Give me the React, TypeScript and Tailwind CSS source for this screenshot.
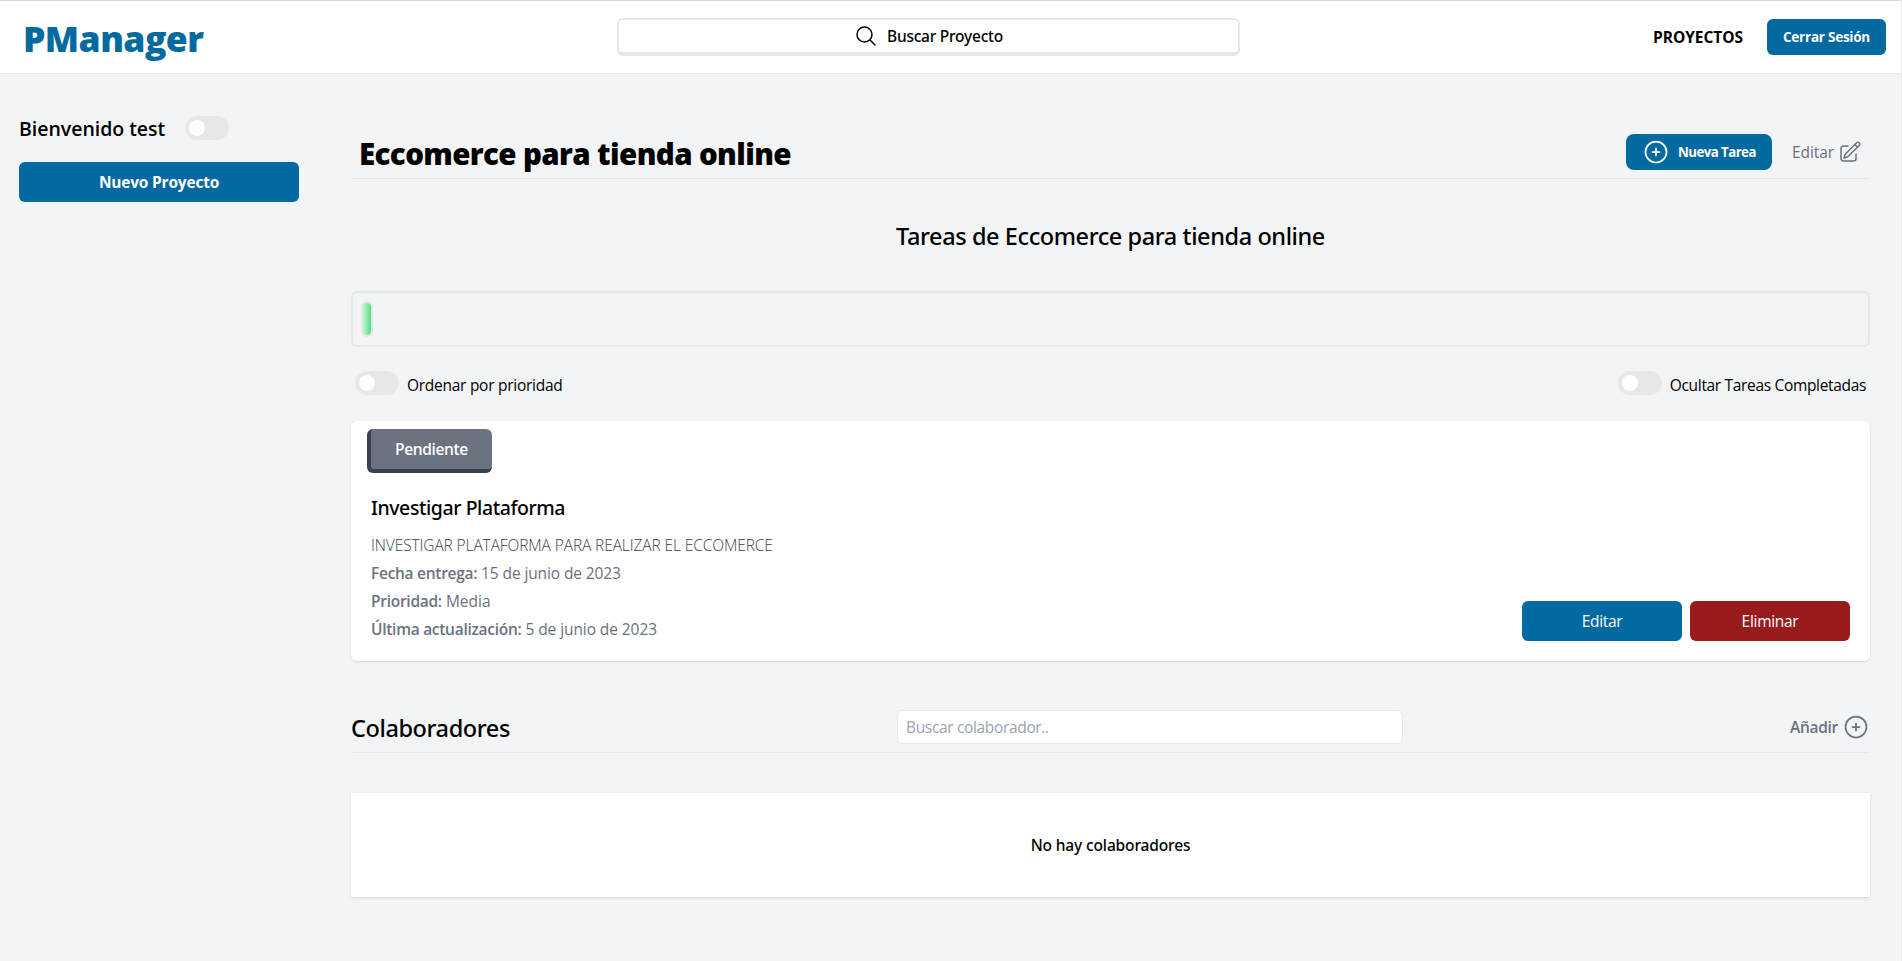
import type { ReactNode } from "react";

function Toggle() {
  return (
    <span className="flex h-6 w-11 shrink-0 items-center rounded-full bg-gray-200 px-1">
      <span className="size-4 rounded-full bg-white" />
    </span>
  );
}

function Icon({ className, children }: { className: string; children: ReactNode }) {
  return (
    <svg
      className={className}
      viewBox="0 0 24 24"
      fill="none"
      stroke="currentColor"
      strokeWidth={1.5}
      strokeLinecap="round"
      strokeLinejoin="round"
    >
      {children}
    </svg>
  );
}

function PlusCircle() {
  return (
    <Icon className="size-7 shrink-0">
      <path d="M12 9v6m3-3H9m12 0a9 9 0 11-18 0 9 9 0 0118 0z" />
    </Icon>
  );
}

function Header() {
  return (
    <header className="flex h-[74px] items-center border-t border-b border-t-[#d9d9d9] border-b-gray-200 bg-white pr-[15px] pl-[23px]">
      <h1 className="w-[594px] pt-px text-[35.5px] leading-10 font-extrabold tracking-[-0.57px] text-[#0369a1]">
        PManager
      </h1>
      <button className="flex h-[38px] w-[623px] items-center justify-center gap-[9px] rounded-md border-2 border-b-4 border-gray-200">
        <Icon className="size-6">
          <path d="M21 21l-5.197-5.197m0 0A7.5 7.5 0 105.196 5.196a7.5 7.5 0 0010.607 10.607z" />
        </Icon>
        <span className="font-['Noto_Sans',sans-serif] text-[15.5px] leading-6 font-medium tracking-[-0.23px]">
          Buscar Proyecto
        </span>
      </button>
      <nav className="ml-auto flex items-center gap-6">
        <a className="text-[15.5px] leading-6 font-bold tracking-[-0.05px]">PROYECTOS</a>
        <button className="h-9 w-[119px] rounded-md bg-[#0369a1] text-[13.5px] leading-5 font-bold tracking-[-0.24px] text-white">
          Cerrar Sesión
        </button>
      </nav>
    </header>
  );
}

function Sidebar() {
  return (
    <aside className="w-[280px] shrink-0 pt-10">
      <div className="flex h-7 items-center gap-5">
        <p className="pt-0.5 text-[19.5px] leading-7 font-semibold tracking-[-0.03px]">Bienvenido test</p>
        <Toggle />
      </div>
      <button className="mt-5 h-10 w-full rounded-md bg-[#0369a1] text-[15.5px] leading-6 font-bold tracking-[-0.2px] text-white">
        Nuevo Proyecto
      </button>
    </aside>
  );
}

function TaskCard() {
  return (
    <article className="mt-[26px] h-60 rounded-md bg-white px-4 pt-2 shadow">
      <div className="flex h-11 w-[125px] items-center justify-center rounded-md border-b-4 border-l-4 border-[#374151] bg-[#6b7280] text-[15.5px] leading-6 font-semibold tracking-[-0.37px] text-white">
        Pendiente
      </div>
      <div className="flex h-[168px] justify-between pr-1 pl-1">
        <div className="pt-[21px] text-[15.5px] leading-7 text-[#6b7280]">
          <h3 className="font-['Noto_Sans',sans-serif] text-[19.5px] leading-7 font-medium tracking-[-0.43px] text-black">
            Investigar Plataforma
          </h3>
          <p className="mt-[9px] font-light tracking-[-0.11px] text-[#374151] uppercase">
            Investigar plataforma para realizar el eccomerce
          </p>
          <p className="tracking-[-0.11px]">
            <b className="font-semibold tracking-[-0.28px]">Fecha entrega:</b> 15 de junio de 2023
          </p>
          <p>
            <b className="font-semibold tracking-[-0.27px]">Prioridad:</b> Media
          </p>
          <p className="tracking-[-0.08px]">
            <b className="font-semibold tracking-[-0.28px]">Última actualización:</b> 5 de junio de 2023
          </p>
        </div>
        <div className="flex items-end gap-2 text-[15.5px] leading-6 tracking-[-0.3px] text-white">
          <button className="h-10 w-40 rounded-md bg-[#0369a1]">Editar</button>
          <button className="h-10 w-40 rounded-md bg-[#991b1b]">Eliminar</button>
        </div>
      </div>
    </article>
  );
}

function Collaborators() {
  return (
    <section className="mt-[49px]">
      <div className="flex h-[43px] items-start border-b border-gray-200">
        <h2 className="w-[546px] pt-0.5 font-['Noto_Sans',sans-serif] text-[23.5px] leading-8 font-medium tracking-[-0.41px]">
          Colaboradores
        </h2>
        <input
          className="h-[34px] w-[506px] rounded-md border border-gray-200 bg-white px-2 text-[15.5px] tracking-[-0.34px] placeholder:text-[#9ca3af]"
          placeholder="Buscar colaborador.."
        />
        <button className="ml-auto flex h-[34px] items-center gap-1 text-[15.5px] leading-6 font-semibold tracking-[-0.3px] text-[#6b7280]">
          Añadir
          <PlusCircle />
        </button>
      </div>
      <div className="mt-10 flex h-[104px] items-center justify-center bg-white font-['Noto_Sans',sans-serif] text-[15.5px] leading-6 font-medium tracking-[-0.14px] shadow">
        No hay colaboradores
      </div>
    </section>
  );
}

export default function App() {
  return (
    <div className="h-[961px] overflow-hidden border-r border-[#e9eaec] bg-[#f3f4f6] font-['Open_Sans','Noto_Sans',sans-serif] text-black">
      <Header />
      <div className="flex gap-[52px] pr-[31px] pl-[19px]">
        <Sidebar />
        <main className="min-w-0 flex-1">
          <div className="flex h-[105px] items-end border-b border-gray-200 pb-2">
            <h2 className="-mb-0.5 pl-2 text-[29.5px] leading-9 font-extrabold tracking-[-0.62px]">
              Eccomerce para tienda online
            </h2>
            <button className="ml-auto flex h-9 w-[146px] items-center gap-2 rounded-lg bg-[#0369a1] pl-4 text-[13.25px] leading-5 font-bold tracking-[-0.54px] text-white">
              <PlusCircle />
              Nueva Tarea
            </button>
            <button className="mr-2 ml-5 flex h-9 items-center gap-1 text-[15.5px] leading-6 tracking-[-0.08px] text-[#6b7280]">
              Editar
              <Icon className="size-6">
                <path d="M16.862 4.487l1.687-1.688a1.875 1.875 0 112.652 2.652L10.582 16.07a4.5 4.5 0 01-1.897 1.13L6 18l.8-2.685a4.5 4.5 0 011.13-1.897l8.932-8.931zm0 0L19.5 7.125M18 14v4.75A2.25 2.25 0 0115.75 21H5.25A2.25 2.25 0 013 18.75V8.25A2.25 2.25 0 015.25 6H10" />
              </Icon>
            </button>
          </div>
          <h3 className="mt-[41px] text-center font-['Noto_Sans',sans-serif] text-[23.5px] leading-8 font-medium tracking-[-0.41px]">
            Tareas de Eccomerce para tienda online
          </h3>
          <div className="mt-[39px] h-14 rounded-md border-2 border-gray-200 p-2">
            <div className="h-9 w-3 rounded-md border-2 border-gray-200 bg-linear-to-r from-[#bbf7d0] to-[#4ade80]" />
          </div>
          <div className="mt-6 flex h-6 justify-between pr-1 pl-1 text-[15.5px] leading-7">
            <label className="flex gap-2 tracking-[-0.27px]">
              <Toggle />
              Ordenar por prioridad
            </label>
            <label className="flex gap-2 tracking-[-0.33px]">
              <Toggle />
              Ocultar Tareas Completadas
            </label>
          </div>
          <TaskCard />
          <Collaborators />
        </main>
      </div>
    </div>
  );
}
